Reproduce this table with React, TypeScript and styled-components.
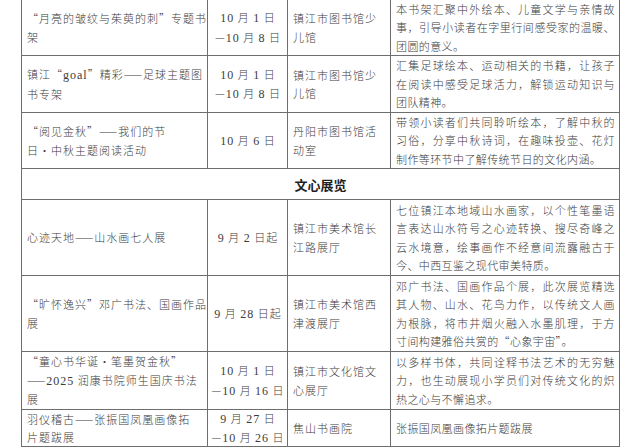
import React from 'react';
import styled, { createGlobalStyle } from 'styled-components';

const GlobalStyle = createGlobalStyle`
  html, body {
    margin: 0;
    padding: 0;
    background: #fff;
  }
  body {
    font-family: "Noto Sans CJK SC", "Noto Sans", sans-serif;
    color: #444;
  }
`;

type Row = {
  name: string[];
  date: string[];
  place: string[];
  desc: string[];
};

const libraryRows: Row[] = [
  {
    name: ['“月亮的皱纹与茱萸的刺”专题书', '架'],
    date: ['10 月 1 日', '—10 月 8 日'],
    place: ['镇江市图书馆少', '儿馆'],
    desc: ['本书架汇聚中外绘本、儿童文学与亲情故', '事，引导小读者在字里行间感受家的温暖、', '团圆的意义。'],
  },
  {
    name: ['镇江“goal”精彩——足球主题图', '书专架'],
    date: ['10 月 1 日', '—10 月 8 日'],
    place: ['镇江市图书馆少', '儿馆'],
    desc: ['汇集足球绘本、运动相关的书籍，让孩子', '在阅读中感受足球活力，解锁运动知识与', '团队精神。'],
  },
  {
    name: ['“阅见金秋”——我们的节', '日·中秋主题阅读活动'],
    date: ['10 月 6 日'],
    place: ['丹阳市图书馆活', '动室'],
    desc: ['带领小读者们共同聆听绘本，了解中秋的', '习俗，分享中秋诗词，在趣味投壶、花灯', '制作等环节中了解传统节日的文化内涵。'],
  },
];

const artRows: Row[] = [
  {
    name: ['心迹天地——山水画七人展'],
    date: ['9 月 2 日起'],
    place: ['镇江市美术馆长', '江路展厅'],
    desc: ['七位镇江本地域山水画家，以个性笔墨语', '言表达山水符号之心迹转换、搜尽奇峰之', '云水境意，绘事画作不经意间流露融古于', '今、中西互鉴之现代审美特质。'],
  },
  {
    name: ['“旷怀逸兴”邓广书法、国画作品', '展'],
    date: ['9 月 28 日起'],
    place: ['镇江市美术馆西', '津渡展厅'],
    desc: ['邓广书法、国画作品个展，此次展览精选', '其人物、山水、花鸟力作，以传统文人画', '为根脉，将市井烟火融入水墨肌理，于方', '寸间构建雅俗共赏的“心象宇宙”。'],
  },
  {
    name: ['“童心书华诞·笔墨贺金秋”', '——2025 润康书院师生国庆书法', '展'],
    date: ['10 月 1 日', '—10 月 16 日'],
    place: ['镇江市文化馆文', '心展厅'],
    desc: ['以多样书体，共同诠释书法艺术的无穷魅', '力，也生动展现小学员们对传统文化的炽', '热之心与不懈追求。'],
  },
  {
    name: ['羽仪稽古——张振国凤凰画像拓', '片题跋展'],
    date: ['9 月 27 日', '—10 月 26 日'],
    place: ['焦山书画院'],
    desc: ['张振国凤凰画像拓片题跋展'],
  },
];

const Page = styled.div`
  margin-top: -1px;
  padding-left: 21px;
`;

const Table = styled.div`
  display: grid;
  grid-template-columns: 186px 80px 103px 229px;
  grid-template-rows: 56px 57px 56px 31px 76px 76px 58px 37px;
  width: 599px;
  box-sizing: border-box;
  border-top: 1px solid #6e6e6e;
  border-left: 1px solid #6e6e6e;
`;

const Cell = styled.div<{ $center?: boolean; $tight?: boolean }>`
  box-sizing: border-box;
  border-right: 1px solid #6e6e6e;
  border-bottom: 1px solid #6e6e6e;
  padding: 0 4px 0 5px;
  display: flex;
  flex-direction: column;
  justify-content: center;
  align-items: ${(p) => (p.$center ? 'center' : 'stretch')};
  font-size: 11px;
  font-weight: 300;
  line-height: 18.5px;
  letter-spacing: ${(p) => (p.$tight ? '0.4px' : '1px')};
  color: #3c3c3c;
  overflow: hidden;
`;

const Line = styled.div<{ $fill?: boolean }>`
  white-space: ${(p) => (p.$fill ? 'normal' : 'nowrap')};
  text-align: justify;
  text-align-last: ${(p) => (p.$fill ? 'justify' : 'left')};
`;

const Latin = styled.span`
  font-family: "Liberation Serif", "Times New Roman", serif;
  font-weight: 400;
  font-size: 12px;
`;

const Section = styled.div`
  grid-column: 1 / -1;
  box-sizing: border-box;
  border-right: 1px solid #6e6e6e;
  border-bottom: 1px solid #6e6e6e;
  display: flex;
  align-items: center;
  justify-content: center;
  font-size: 13px;
  font-weight: 700;
  color: #1e1e1e;
  padding-top: 1px;
`;

const withLatin = (text: string) =>
  text.split(/([0-9A-Za-z]+)/).map((part, i) =>
    /^[0-9A-Za-z]+$/.test(part) ? <Latin key={i}>{part}</Latin> : part
  );

const Lines: React.FC<{ lines: string[]; fill?: boolean }> = ({ lines, fill }) => (
  <>
    {lines.map((l, i) => (
      <Line key={i} $fill={fill && i < lines.length - 1}>
        {withLatin(l)}
      </Line>
    ))}
  </>
);

const EventRow: React.FC<{ row: Row }> = ({ row }) => (
  <>
    <Cell>
      <Lines lines={row.name} />
    </Cell>
    <Cell $center>
      <Lines lines={row.date} />
    </Cell>
    <Cell>
      <Lines lines={row.place} />
    </Cell>
    <Cell $tight>
      <Lines lines={row.desc} fill />
    </Cell>
  </>
);

export default function App() {
  return (
    <>
      <GlobalStyle />
      <Page>
        <Table>
          {libraryRows.map((r, i) => (
            <EventRow key={`l${i}`} row={r} />
          ))}
          <Section>文心展览</Section>
          {artRows.map((r, i) => (
            <EventRow key={`a${i}`} row={r} />
          ))}
        </Table>
      </Page>
    </>
  );
}
